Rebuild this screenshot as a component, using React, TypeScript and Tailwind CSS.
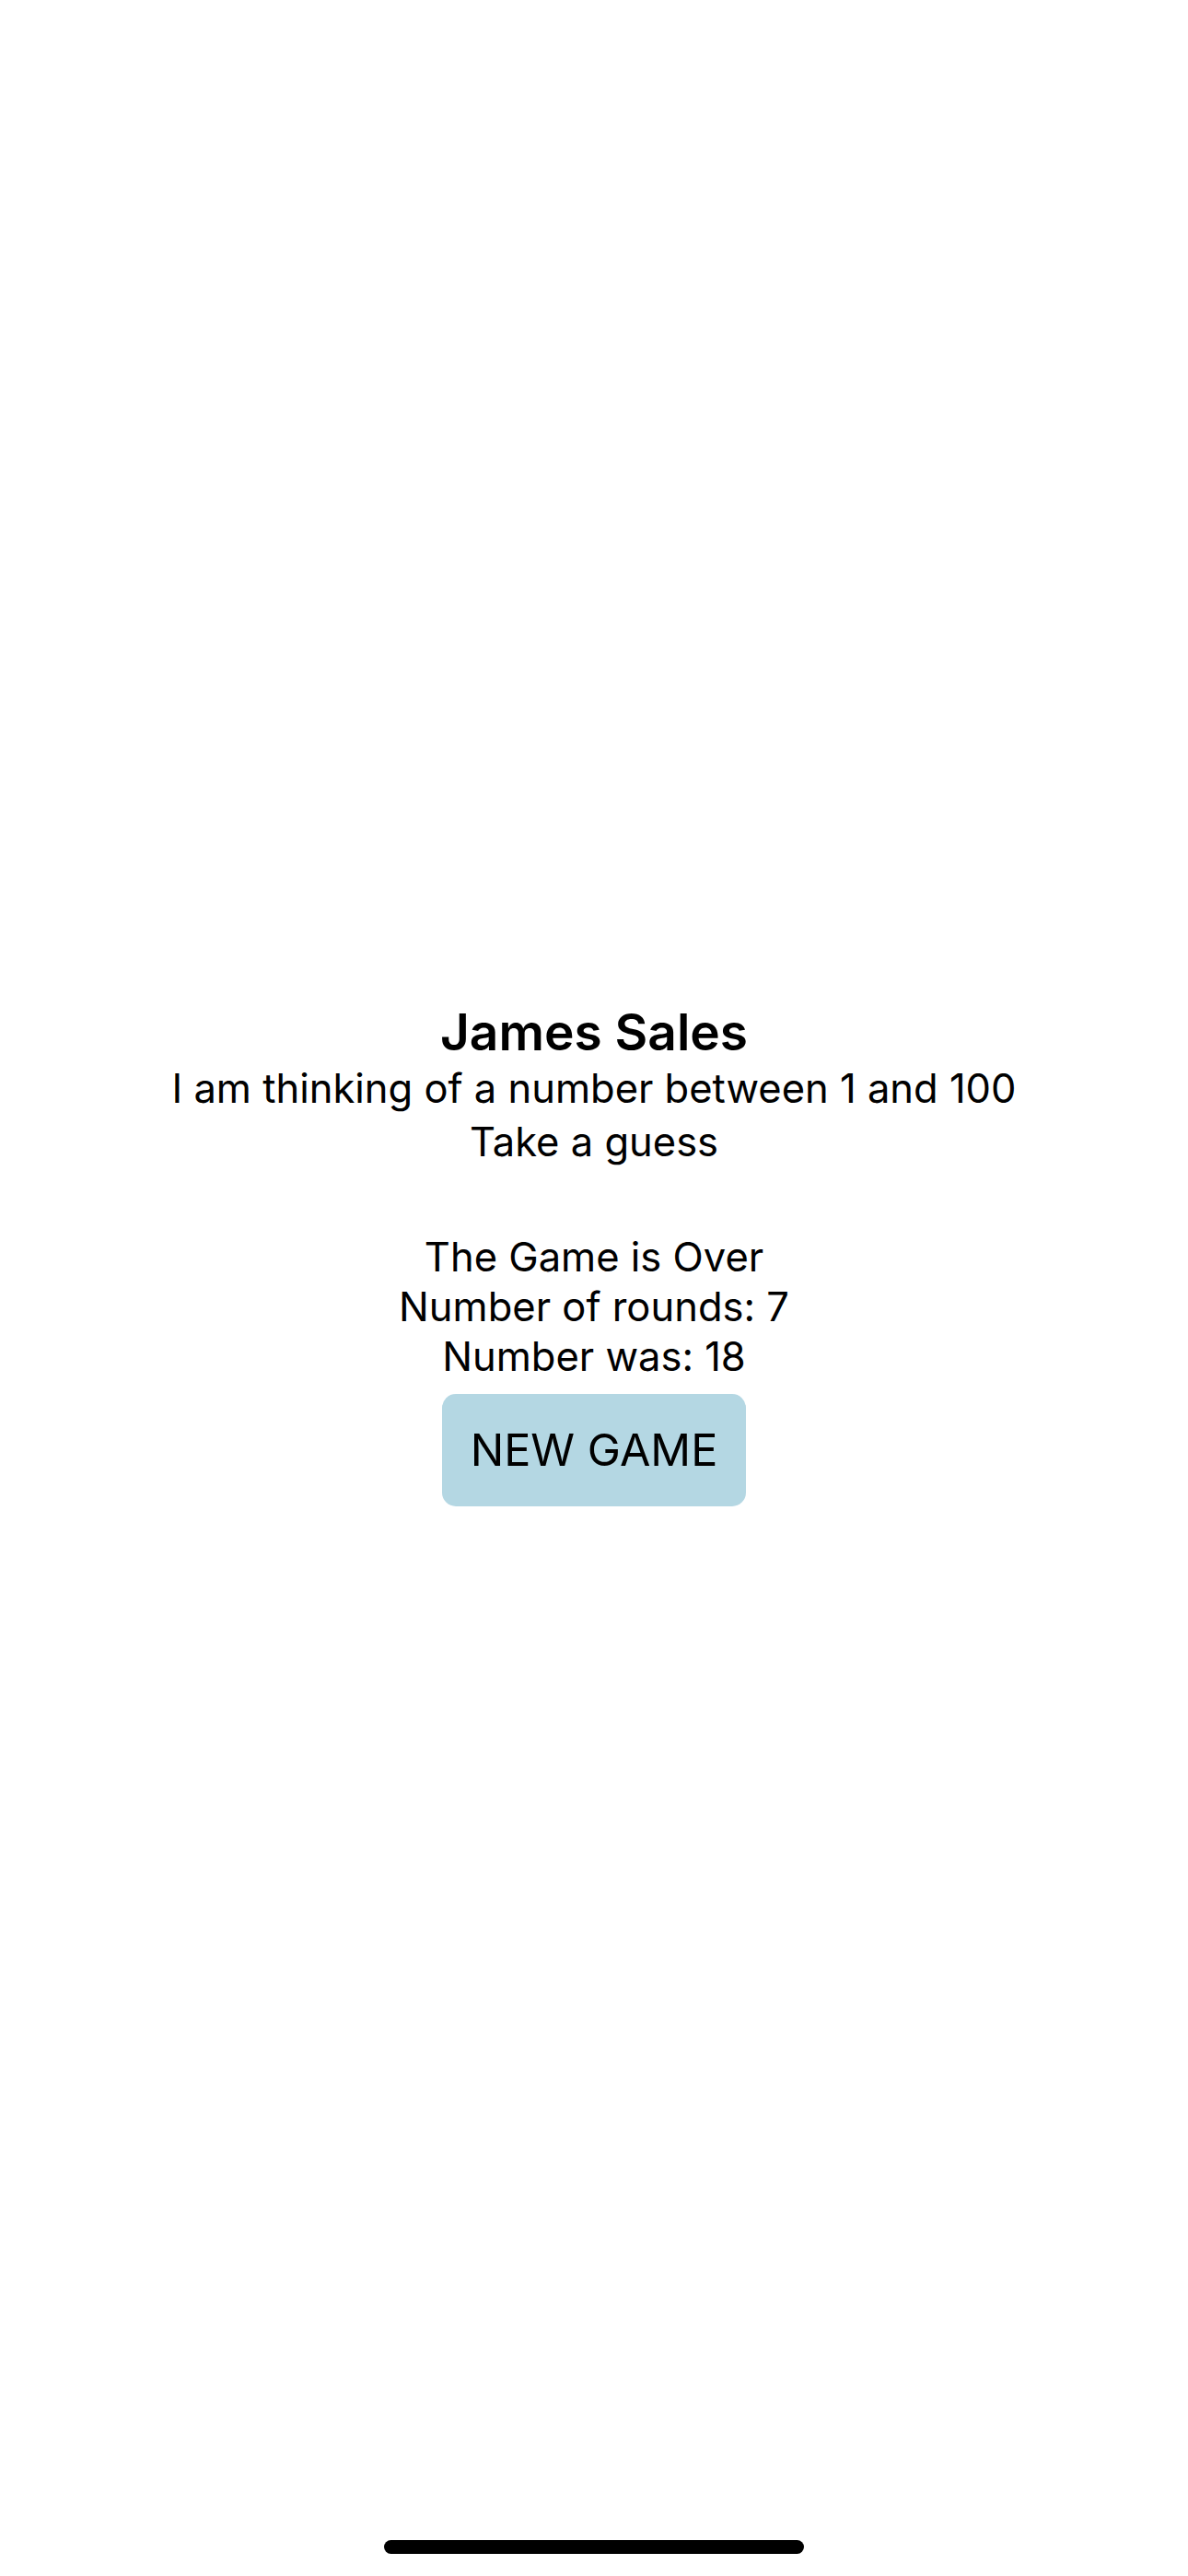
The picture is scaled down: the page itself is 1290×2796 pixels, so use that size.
import React from "react";

const App: React.FC = () => {
  const rounds = 7;
  const target = 18;

  return (
    <div
      className="h-[2796px] w-[1290px] bg-white flex flex-col items-center text-black"
      style={{ fontFamily: "Inter, 'Noto Sans', sans-serif" }}
    >
      <div className="pt-[1088px] flex flex-col items-center text-center">
        <h1 className="text-[55px] leading-[64px] font-semibold">James Sales</h1>
        <p className="text-[43.5px] leading-[58px]">
          I am thinking of a number between 1 and 100
        </p>
        <p className="text-[43.5px] leading-[58px]">Take a guess</p>

        {/* game over block */}
        <div className="mt-[69px] flex flex-col items-center">
          <p className="text-[43.5px] leading-[54px]">The Game is Over</p>
          <p className="text-[43.5px] leading-[54px]">Number of rounds: {rounds}</p>
          <p className="text-[43.5px] leading-[54px]">Number was: {target}</p>
          <button
            type="button"
            className="mt-[14px] w-[330px] h-[122px] rounded-[15px] bg-[#b4d7e3] text-[48.5px] flex items-center justify-center"
          >
            NEW GAME
          </button>
        </div>
      </div>

      <div className="mt-auto pb-[24px]">
        <div className="w-[456px] h-[15px] rounded-full bg-black" />
      </div>
    </div>
  );
};

export default App;
